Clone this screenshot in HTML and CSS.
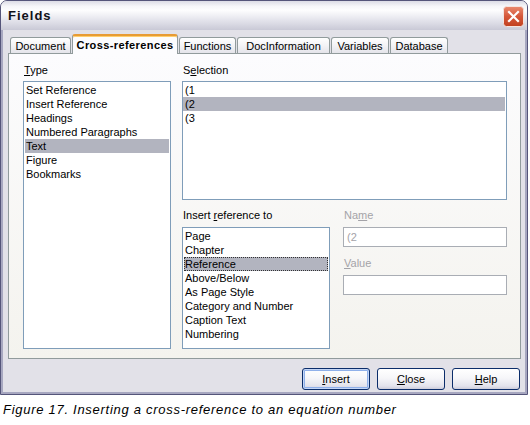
FILE: index.html
```html
<!DOCTYPE html>
<html>
<head>
<meta charset="utf-8">
<link rel="stylesheet" href="styles.css">
</head>
<body>
<div class="window">
  <div class="titlebar">
    <span class="title">Fields</span>
    <span class="close">
      <svg width="21" height="21" viewBox="0 0 21 21">
        <defs>
          <linearGradient id="cg" x1="0" y1="0" x2="0" y2="1">
            <stop offset="0" stop-color="#e98a6f"/>
            <stop offset="0.5" stop-color="#d5573a"/>
            <stop offset="1" stop-color="#c1401f"/>
          </linearGradient>
        </defs>
        <rect x="0.5" y="0.5" width="20" height="20" rx="3" fill="url(#cg)" stroke="#f4e4e0"/>
        <path d="M6 6 L15 15 M15 6 L6 15" stroke="#fff" stroke-width="2.2" stroke-linecap="square"/>
      </svg>
    </span>
  </div>
  <div class="frame">
    <div class="tabs">
      <div class="tab t-doc">Document</div>
      <div class="tab active t-xref">Cross-references</div>
      <div class="tab t-fun">Functions</div>
      <div class="tab t-info">DocInformation</div>
      <div class="tab t-var">Variables</div>
      <div class="tab t-db">Database</div>
    </div>
    <div class="panel">
      <div class="col-left">
        <div class="label"><u>T</u>ype</div>
        <div class="list list-type">
          <div class="item">Set Reference</div>
          <div class="item">Insert Reference</div>
          <div class="item">Headings</div>
          <div class="item">Numbered Paragraphs</div>
          <div class="item sel">Text</div>
          <div class="item">Figure</div>
          <div class="item">Bookmarks</div>
        </div>
      </div>
      <div class="col-right">
        <div class="label">S<u>e</u>lection</div>
        <div class="list list-sel">
          <div class="item">(1</div>
          <div class="item sel">(2</div>
          <div class="item">(3</div>
        </div>
        <div class="lower">
          <div class="col-ins">
            <div class="label">Insert <u>r</u>eference to</div>
            <div class="list list-ins">
              <div class="item">Page</div>
              <div class="item">Chapter</div>
              <div class="item sel focus">Reference</div>
              <div class="item">Above/Below</div>
              <div class="item">As Page Style</div>
              <div class="item">Category and Number</div>
              <div class="item">Caption Text</div>
              <div class="item">Numbering</div>
            </div>
          </div>
          <div class="col-name">
            <div class="label disabled">Na<u>m</u>e</div>
            <div class="field disabled">(2</div>
            <div class="label disabled label-value"><u>V</u>alue</div>
            <div class="field"></div>
          </div>
        </div>
      </div>
    </div>
    <div class="buttons">
      <div class="btn default"><span><u>I</u>nsert</span></div>
      <div class="btn"><span><u>C</u>lose</span></div>
      <div class="btn"><span><u>H</u>elp</span></div>
    </div>
  </div>
</div>
<p class="caption">Figure 17. Inserting a cross-reference to an equation number</p>
</body>
</html>
```

FILE: styles.css
```css
body {
  margin: 0;
  background: #ffffff;
  font-family: "Liberation Sans", Arial, sans-serif;
  font-size: 11px;
  color: #000;
}

u { text-decoration: underline; text-underline-offset: 1px; }

.window {
  width: 528px;
  box-sizing: border-box;
  border: 1px solid #55557a;
  border-radius: 7px 7px 0 0;
  background: #e2e1e8;
  overflow: hidden;
}

.titlebar {
  height: 29px;
  display: flex;
  align-items: center;
  justify-content: space-between;
  padding: 0 3px 0 7px;
  background: linear-gradient(#dcdce6 0%, #f6f6f9 18%, #fdfdfe 32%, #ececf2 55%, #d9d9e3 80%, #c9c9d6 100%);
}

.title {
  font-weight: bold;
  font-size: 13px;
  letter-spacing: 1px;
  color: #101018;
}

.close {
  display: flex;
  margin-top: 2px;
}

.frame {
  border: 2px solid #a7a7c0;
  border-top: 0;
  padding: 4px 4px 2px 5px;
}

.tabs {
  display: flex;
  align-items: flex-end;
  height: 19px;
  gap: 1px;
  padding-left: 2px;
}

.tab {
  height: 16px;
  box-sizing: border-box;
  border: 1px solid #919b9c;
  border-bottom: 0;
  border-radius: 3px 3px 0 0;
  background: linear-gradient(#ffffff, #f3f3f6 50%, #e4e4ea);
  display: flex;
  align-items: center;
  justify-content: center;
  line-height: 14px;
  padding-top: 1px;
}

.tab.active {
  height: 20px;
  margin-bottom: -1px;
  position: relative;
  z-index: 1;
  background: #fcfcfe;
  border-top: 2px solid #e79b35;
  box-shadow: inset 0 1px 0 #ffcf6e;
  font-weight: bold;
  letter-spacing: 0.4px;
  padding-top: 0;
  padding-bottom: 1px;
}

.t-doc { width: 61px; }
.t-xref { width: 106px; }
.t-fun { width: 57px; }
.t-info { width: 93px; }
.t-var { width: 58px; }
.t-db { width: 58px; }

.panel {
  display: flex;
  gap: 11px;
  padding: 9px 13px 9px 14px;
  border: 1px solid #919b9c;
  background: linear-gradient(#fcfcfe, #f4f3ee);
}

.col-left {
  width: 148px;
  display: flex;
  flex-direction: column;
}

.col-right {
  width: 325px;
  display: flex;
  flex-direction: column;
}

.label {
  height: 14px;
  line-height: 14px;
  margin-bottom: 4px;
  padding-left: 1px;
}

.label.disabled {
  color: #a4a3a8;
}

.list {
  box-sizing: border-box;
  border: 1px solid #7f9db9;
  background: #ffffff;
  padding: 1px;
}

.list-type { height: 268px; }
.list-sel { height: 119px; padding-left: 0; }
.list-sel .item { padding-left: 2px; }

.item {
  height: 14px;
  line-height: 14px;
  padding-left: 1px;
  white-space: nowrap;
}

.item.sel {
  background: #b2b4bf;
}

.item.focus {
  outline: 1px dotted #333;
  outline-offset: -1px;
}

.lower {
  display: flex;
  gap: 13px;
  margin-top: 8px;
}

.col-ins {
  width: 148px;
  display: flex;
  flex-direction: column;
}

.col-ins .label { margin-bottom: 5px; }

.list-ins { height: 122px; }

.col-name {
  flex: 1;
  display: flex;
  flex-direction: column;
}

.col-name .label { margin-bottom: 5px; }

.label-value { margin-top: 9px; }

.field {
  height: 20px;
  box-sizing: border-box;
  border: 1px solid #a9adb4;
  background: #ffffff;
  line-height: 18px;
  padding-left: 3px;
}

.field.disabled {
  color: #a4a3a8;
}

.buttons {
  display: flex;
  justify-content: flex-end;
  gap: 7px;
  margin-top: 9px;
  padding-right: 1px;
}

.btn {
  width: 68px;
  height: 22px;
  box-sizing: border-box;
  border: 1px solid #0b2d6a;
  border-radius: 3px;
  background: linear-gradient(#ffffff, #f6f6f9 45%, #e3e3ec 85%, #cdcddb);
  display: flex;
  align-items: center;
  justify-content: center;
}

.btn.default {
  box-shadow: inset 0 0 0 1px #c4d6f6, inset 0 0 0 2px #8fb0ea;
}

.caption {
  margin: 7px 0 0 3px;
  font-style: italic;
  font-size: 13px;
  letter-spacing: 0.72px;
  line-height: 15px;
  color: #000;
}
```
